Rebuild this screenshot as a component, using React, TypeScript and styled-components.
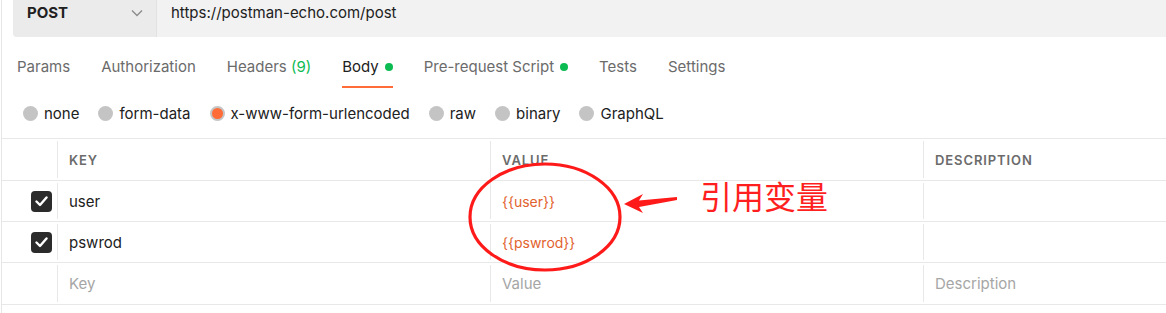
import React from "react";
import styled, { createGlobalStyle } from "styled-components";

const Global = createGlobalStyle`
  html, body { margin: 0; padding: 0; background: #ffffff; }
  body { font-family: Inter, "Noto Sans", "Noto Sans CJK SC", sans-serif; color: #212121; }
  * { box-sizing: border-box; }
`;

const Page = styled.div`
  position: relative;
  width: 1166px;
  height: 313px;
  overflow: hidden;
  border-left: 1px solid #e6e6e6;
  margin-left: 1px;
`;

const UrlBar = styled.div`
  display: flex;
  height: 37px;
  margin-left: 11px;
  background: #f2f2f2;
  border-bottom-left-radius: 4px;
  overflow: hidden;
`;

const Method = styled.div`
  width: 144px;
  display: flex;
  align-items: center;
  justify-content: space-between;
  padding: 0 13px 12px 14px;
  background: #ebebeb;
  border-right: 1px solid #e2e2e2;
  font-weight: 700;
  font-size: 15px;
  color: #212121;
`;

const UrlText = styled.div`
  display: flex;
  align-items: center;
  padding: 0 0 12px 14px;
  font-size: 15px;
  color: #212121;
`;

const Tabs = styled.div`
  display: flex;
  gap: 31px;
  padding-left: 15px;
  height: 51px;
`;

const Tab = styled.div<{ $active?: boolean }>`
  display: flex;
  align-items: center;
  gap: 6px;
  font-size: 15px;
  color: ${(p) => (p.$active ? "#212121" : "#6b6b6b")};
  border-bottom: 2px solid ${(p) => (p.$active ? "#ff6c37" : "transparent")};
  padding-top: 10px;
`;

const Count = styled.span`
  color: #0cbb52;
`;

const Dot = styled.span`
  width: 8px;
  height: 8px;
  border-radius: 50%;
  background: #0cbb52;
`;

const Radios = styled.div`
  display: flex;
  align-items: center;
  gap: 19px;
  padding-left: 21px;
  height: 50px;
`;

const RadioItem = styled.label`
  display: flex;
  align-items: center;
  gap: 6px;
  font-size: 15px;
  color: #212121;
`;

const RadioCircle = styled.span<{ $on?: boolean }>`
  width: 15px;
  height: 15px;
  border-radius: 50%;
  background: ${(p) => (p.$on ? "#ff6c37" : "#c4c4c4")};
  border: ${(p) => (p.$on ? "2px solid #c4c4c4" : "none")};
`;

const Table = styled.div`
  display: grid;
  grid-template-columns: 55px 433px 433px 1fr;
  border-top: 1px solid #e8e8e8;
`;

const Cell = styled.div<{ $first?: boolean; $h: number }>`
  height: ${(p) => p.$h}px;
  display: flex;
  align-items: center;
  padding-left: 12px;
  border-bottom: 1px solid #e8e8e8;
  position: relative;
  font-size: 15px;
  &::before {
    content: "";
    display: ${(p) => (p.$first ? "none" : "block")};
    position: absolute;
    left: 0;
    top: 2px;
    bottom: 2px;
    width: 1px;
    background: #e8e8e8;
  }
`;

const CheckCell = styled(Cell)`
  justify-content: flex-end;
  padding-left: 0;
  padding-right: 5px;
`;

const HeadText = styled.span`
  font-size: 13px;
  font-weight: 600;
  letter-spacing: 0.9px;
  color: #6b6b6b;
`;

const KeyText = styled.span`
  color: #212121;
`;

const VarText = styled.span`
  color: #e2622d;
  font-size: 14px;
`;

const Placeholder = styled.span`
  color: #a6a6a6;
`;

const Check = styled.span`
  width: 21px;
  height: 21px;
  border-radius: 4px;
  background: #2b2b2b;
  display: flex;
  align-items: center;
  justify-content: center;
`;

const Annotation = styled.svg`
  position: absolute;
  left: 0;
  top: 0;
  pointer-events: none;
`;

const Label = styled.div`
  position: absolute;
  left: 698px;
  top: 175px;
  font-family: "Noto Sans CJK SC", sans-serif;
  font-size: 32px;
  line-height: 40px;
  color: #ff1f1f;
`;

const Chevron = () => (
  <svg width="12" height="8" viewBox="0 0 12 8" fill="none">
    <path d="M1 1.5 L6 6.5 L11 1.5" stroke="#8a8a8a" strokeWidth="1.3" />
  </svg>
);

const CheckMark = () => (
  <svg width="13" height="11" viewBox="0 0 13 11" fill="none">
    <path d="M1.5 5.5 L5 9 L11.5 1.5" stroke="#ffffff" strokeWidth="2.4" strokeLinecap="round" strokeLinejoin="round" />
  </svg>
);

export default function App() {
  const rows = [
    { key: "user", value: "{{user}}" },
    { key: "pswrod", value: "{{pswrod}}" },
  ];
  return (
    <>
      <Global />
      <Page>
        <UrlBar>
          <Method>
            <span>POST</span>
            <Chevron />
          </Method>
          <UrlText>https://postman-echo.com/post</UrlText>
        </UrlBar>
        <Tabs>
          <Tab>Params</Tab>
          <Tab>Authorization</Tab>
          <Tab>
            <span>
              Headers <Count>(9)</Count>
            </span>
          </Tab>
          <Tab $active>
            Body <Dot />
          </Tab>
          <Tab>
            Pre-request Script <Dot />
          </Tab>
          <Tab>Tests</Tab>
          <Tab>Settings</Tab>
        </Tabs>
        <Radios>
          {["none", "form-data", "x-www-form-urlencoded", "raw", "binary", "GraphQL"].map((t) => (
            <RadioItem key={t}>
              <RadioCircle $on={t === "x-www-form-urlencoded"} />
              {t}
            </RadioItem>
          ))}
        </Radios>
        <Table>
          <Cell $first $h={42} />
          <Cell $h={42}>
            <HeadText>KEY</HeadText>
          </Cell>
          <Cell $h={42}>
            <HeadText>VALUE</HeadText>
          </Cell>
          <Cell $h={42}>
            <HeadText>DESCRIPTION</HeadText>
          </Cell>
          {rows.map((r) => (
            <React.Fragment key={r.key}>
              <CheckCell $first $h={41}>
                <Check>
                  <CheckMark />
                </Check>
              </CheckCell>
              <Cell $h={41}>
                <KeyText>{r.key}</KeyText>
              </Cell>
              <Cell $h={41}>
                <VarText>{r.value}</VarText>
              </Cell>
              <Cell $h={41} />
            </React.Fragment>
          ))}
          <Cell $first $h={42} />
          <Cell $h={42}>
            <Placeholder>Key</Placeholder>
          </Cell>
          <Cell $h={42}>
            <Placeholder>Value</Placeholder>
          </Cell>
          <Cell $h={42}>
            <Placeholder>Description</Placeholder>
          </Cell>
        </Table>
        <Annotation width="1166" height="313" viewBox="0 0 1166 313">
          <ellipse cx="543" cy="217" rx="75" ry="53" fill="none" stroke="#ff1a1a" strokeWidth="3.2" />
          <polygon points="622,204 641,194 637,200.5 675,197 675,200 637,207 641,213" fill="#ff1a1a" />
        </Annotation>
        <Label>引用变量</Label>
      </Page>
    </>
  );
}
